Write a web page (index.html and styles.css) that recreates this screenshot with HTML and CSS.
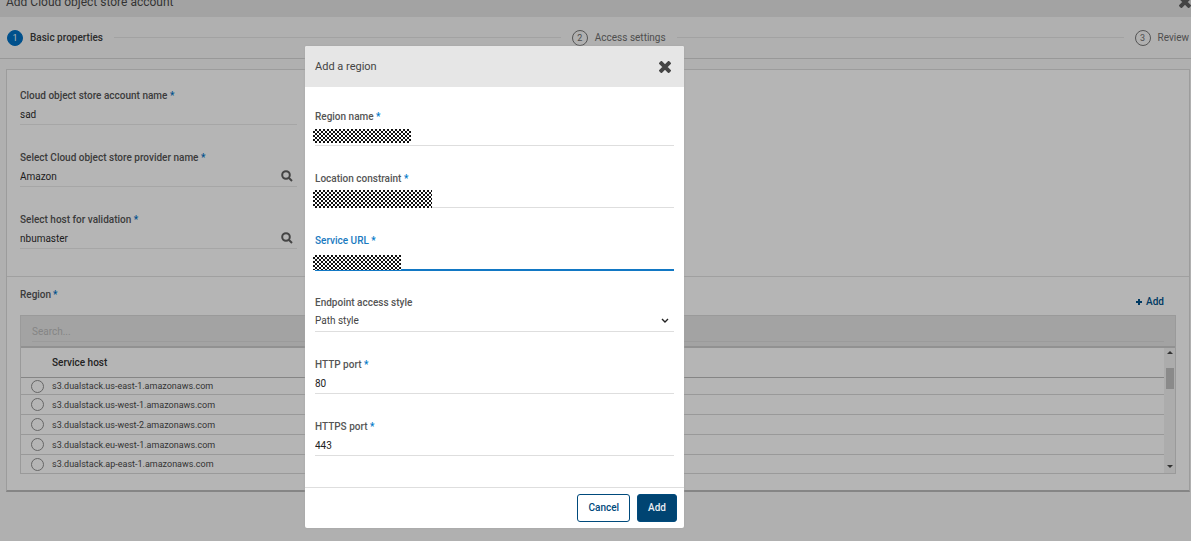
FILE: index.html
```html
<!DOCTYPE html>
<html lang="en">
<head>
<meta charset="utf-8">
<title>Add Cloud object store account</title>
<link rel="stylesheet" href="styles.css">
</head>
<body>
<div class="page">
  <header class="topbar">
    <h1 class="topbar-title">Add Cloud object store account</h1>
    <button class="icon-button" aria-label="Close"><svg class="close" viewBox="0 0 12 12"><path d="M2.4 2.4 9.6 9.6M9.6 2.4 2.4 9.6"/></svg></button>
  </header>
  <ol class="steps">
    <li class="step step-current"><span class="step-number">1</span><span>Basic properties</span></li>
    <li class="step-line" role="presentation"></li>
    <li class="step"><span class="step-number">2</span><span>Access settings</span></li>
    <li class="step-line" role="presentation"></li>
    <li class="step"><span class="step-number">3</span><span>Review</span></li>
  </ol>
  <main class="card">
    <section class="account">
      <div class="field">
        <label for="account">Cloud object store account name <span class="star">*</span></label>
        <div class="control"><input id="account" type="text" value="sad"></div>
      </div>
      <div class="field">
        <label for="provider">Select Cloud object store provider name <span class="star">*</span></label>
        <div class="control"><input id="provider" type="text" value="Amazon"><button class="icon-button lookup" aria-label="Find provider"><svg class="search" viewBox="0 0 12 12"><circle cx="5" cy="5" r="3.8"/><path d="m8 8 3 3"/></svg></button></div>
      </div>
      <div class="field">
        <label for="host">Select host for validation <span class="star">*</span></label>
        <div class="control"><input id="host" type="text" value="nbumaster"><button class="icon-button lookup" aria-label="Find host"><svg class="search" viewBox="0 0 12 12"><circle cx="5" cy="5" r="3.8"/><path d="m8 8 3 3"/></svg></button></div>
      </div>
    </section>
    <section class="region">
      <div class="region-head">
        <h2 class="region-title">Region <span class="star">*</span></h2>
        <button class="add-link"><svg class="plus" viewBox="0 0 8 8"><path d="M4 1v6M1 4h6"/></svg>Add</button>
      </div>
      <div class="grid">
        <div class="grid-search"><input type="text" aria-label="Search" placeholder="Search..."></div>
        <div class="grid-body">
          <table class="hosts">
            <thead><tr><th class="pick"></th><th>Service host</th></tr></thead>
            <tbody>
              <tr><td class="pick"><input type="radio" name="h" id="h1"></td><td><label for="h1">s3.dualstack.us-east-1.amazonaws.com</label></td></tr>
              <tr><td class="pick"><input type="radio" name="h" id="h2"></td><td><label for="h2">s3.dualstack.us-west-1.amazonaws.com</label></td></tr>
              <tr><td class="pick"><input type="radio" name="h" id="h3"></td><td><label for="h3">s3.dualstack.us-west-2.amazonaws.com</label></td></tr>
              <tr><td class="pick"><input type="radio" name="h" id="h4"></td><td><label for="h4">s3.dualstack.eu-west-1.amazonaws.com</label></td></tr>
              <tr><td class="pick"><input type="radio" name="h" id="h5"></td><td><label for="h5">s3.dualstack.ap-east-1.amazonaws.com</label></td></tr>
            </tbody>
          </table>
          <div class="scrollbar">
            <svg class="arrow" viewBox="0 0 6 4"><path d="M0 4 3 1l3 3z"/></svg>
            <div class="thumb"></div>
            <svg class="arrow" viewBox="0 0 6 4"><path d="M0 0h6L3 3z"/></svg>
          </div>
        </div>
      </div>
    </section>
  </main>
</div>

<div class="modal" role="dialog" aria-labelledby="modal-title">
  <header class="modal-head">
    <h2 class="modal-title" id="modal-title">Add a region</h2>
    <button class="icon-button" aria-label="Close dialog"><svg class="close" viewBox="0 0 12 12"><path d="M2.4 2.4 9.6 9.6M9.6 2.4 2.4 9.6"/></svg></button>
  </header>
  <form class="modal-body">
    <div class="field">
      <label for="rname">Region name <span class="star">*</span></label>
      <div class="control"><input id="rname" type="text"><span class="mask mask-name"></span></div>
    </div>
    <div class="field">
      <label for="location">Location constraint <span class="star">*</span></label>
      <div class="control"><input id="location" type="text"><span class="mask mask-location"></span></div>
    </div>
    <div class="field field-active">
      <label for="url">Service URL <span class="star">*</span></label>
      <div class="control"><input id="url" type="text"><span class="mask mask-url"></span></div>
    </div>
    <div class="field">
      <label for="style">Endpoint access style</label>
      <div class="control"><select id="style"><option>Path style</option></select><svg class="chevron" viewBox="0 0 8 6"><path d="m1 1 3 3 3-3"/></svg></div>
    </div>
    <div class="field">
      <label for="http">HTTP port <span class="star">*</span></label>
      <div class="control"><input id="http" type="text" value="80"></div>
    </div>
    <div class="field">
      <label for="https">HTTPS port <span class="star">*</span></label>
      <div class="control"><input id="https" type="text" value="443"></div>
    </div>
  </form>
  <footer class="modal-foot">
    <button class="button">Cancel</button>
    <button class="button button-primary">Add</button>
  </footer>
</div>
</body>
</html>
```
FILE: styles.css
```css
* { box-sizing: border-box; }
body {
  margin: 0;
  min-height: 100vh;
  overflow: hidden;
  background: #b0b0b0;
  color: #333;
  font: 10px/16px Roboto, sans-serif;
}
h1, h2, ol { margin: 0; padding: 0; font-weight: 400; }
button, input, select { margin: 0; padding: 0; border: 0; background: none; color: inherit; font: inherit; outline: none; }
svg { display: block; fill: none; stroke: currentColor; }

.topbar { display: flex; align-items: flex-start; justify-content: space-between; height: 17px; background: #a3a3a3; padding-left: 6px; }
.topbar-title { font-size: 12px; line-height: 16px; margin-top: -6px; }
.topbar .icon-button { margin-top: -4px; }
.icon-button { display: block; color: #444; }
.close { width: 12px; height: 12px; stroke-width: 4; stroke-linecap: square; stroke-linejoin: round; }

.steps { display: flex; align-items: center; height: 42px; padding: 0 2px 0 7px; border-bottom: 1px solid #989898; list-style: none; }
.step { display: flex; align-items: center; gap: 7px; color: #4e4e4e; white-space: nowrap; }
.step-number { width: 16px; height: 16px; border: 1px solid #555; border-radius: 50%; text-align: center; font-size: 9px; line-height: 14px; }
.step-current { color: #2b2b2b; font-weight: 500; }
.step-current .step-number { background: #00508c; border-color: #00508c; color: #b5b5b5; font-weight: 400; }
.step-line { flex: 1; height: 1px; margin: 0 11px; background: #a2a2a2; }

.card { margin: 10px 1px 0 6px; border: 1px solid #9c9c9c; border-bottom: 2px solid #858585; background: #b5b5b5; }
.account { width: 290px; padding: 18px 0 14px 13px; }
.region { border-top: 1px solid #a0a0a0; padding: 10px 13px 16px 13px; }
.region-head { display: flex; align-items: flex-start; justify-content: space-between; padding-right: 12px; }
.region-title { display: flex; gap: 2px; font-size: 10px; font-weight: 500; color: #3b3b3b; }
.add-link { display: flex; align-items: center; gap: 3px; margin: 7px 0 5px; color: #003a63; font-weight: 500; }
.plus { width: 8px; height: 8px; stroke-width: 2; }

.field { height: 62px; color: #3b3b3b; }
.account .field:last-child { height: 50px; }
.field label { display: block; font-weight: 500; }
.star { color: #00508c; }
.control { position: relative; display: flex; align-items: center; height: 21px; border-bottom: 1px solid #a6a6a6; color: #1c1c1c; }
.control input, .control select { flex: 1; min-width: 0; height: 20px; appearance: none; }
.lookup { margin-right: 4px; }
.search { width: 12px; height: 12px; stroke-width: 2; }

.grid { border: 1px solid #9a9a9a; }
.grid-search { padding: 5px 11px 4px; background: #a3a3a3; border-bottom: 2px solid #919191; }
.grid-search input { display: block; width: 100%; height: 21px; border-bottom: 1px solid #9b9b9b; }
.grid-search input::placeholder { color: #858585; opacity: 1; }
.grid-body { display: flex; }
.hosts { flex: 1; border-collapse: separate; border-spacing: 0; }
.hosts th { height: 30px; padding: 0; border-bottom: 1px solid #858585; text-align: left; font-weight: 500; color: #222; }
.hosts td { height: 20px; padding: 0; border-bottom: 1px solid #999; }
.hosts tbody tr:first-child td { height: 17px; }
.hosts tbody tr:last-child td { height: 18px; border: 0; }
.hosts label { display: block; font-size: 9px; line-height: 12px; }
.hosts .pick { width: 31px; padding-left: 10px; }
.hosts input { display: block; width: 13px; height: 13px; border: 1px solid #666; border-radius: 50%; appearance: none; }
.scrollbar { display: flex; flex-direction: column; align-items: center; width: 11px; padding: 2px 0 4px; background: #acacac; }
.arrow { width: 6px; height: 4px; fill: #333; stroke: none; }
.thumb { width: 8px; height: 21px; margin: 14px 0 auto; background: #8a8a8a; }

.modal { position: absolute; left: 305px; top: 46px; width: 379px; border-radius: 2px; background: #fff; box-shadow: 0 0 2px #a4a4a4; }
.modal-head { display: flex; align-items: center; justify-content: space-between; height: 41px; padding: 0 13px 0 10px; background: #e6e6e6; border-radius: 2px 2px 0 0; }
.modal-title { font-size: 11px; color: #444; }
.modal-body { padding: 22px 10px 6px; }
.modal .field { color: #555; }
.modal .star { color: #0078c8; }
.modal .control { border-color: #dedede; color: #222; }
.modal select { color: #444; }
.modal .field-active { color: #1a7abf; }
.modal .field-active .control { height: 22px; border-bottom: 2px solid #1278c4; }
.mask {
  position: absolute;
  left: -2px;
  background: repeating-conic-gradient(#111 0 25%, #fff 0 50%) 0 0 / 4px 4px;
}
.mask-name { top: 4px; width: 98px; height: 14px; }
.mask-location { top: 3px; width: 119px; height: 18px; }
.mask-url { top: 6px; width: 88px; height: 15px; }
.chevron { width: 8px; height: 6px; stroke-width: 1.4; }
.control .chevron { position: absolute; right: 5px; pointer-events: none; }
.modal-foot { display: flex; justify-content: flex-end; gap: 7px; padding: 6px 7px 6px; border-top: 1px solid #dedede; }
.button { height: 28px; padding: 0 10px; border: 1px solid #004a7c; border-radius: 3px; color: #004a7c; font-weight: 500; }
.button-primary { background: #004472; color: #e8eef3; }
```
